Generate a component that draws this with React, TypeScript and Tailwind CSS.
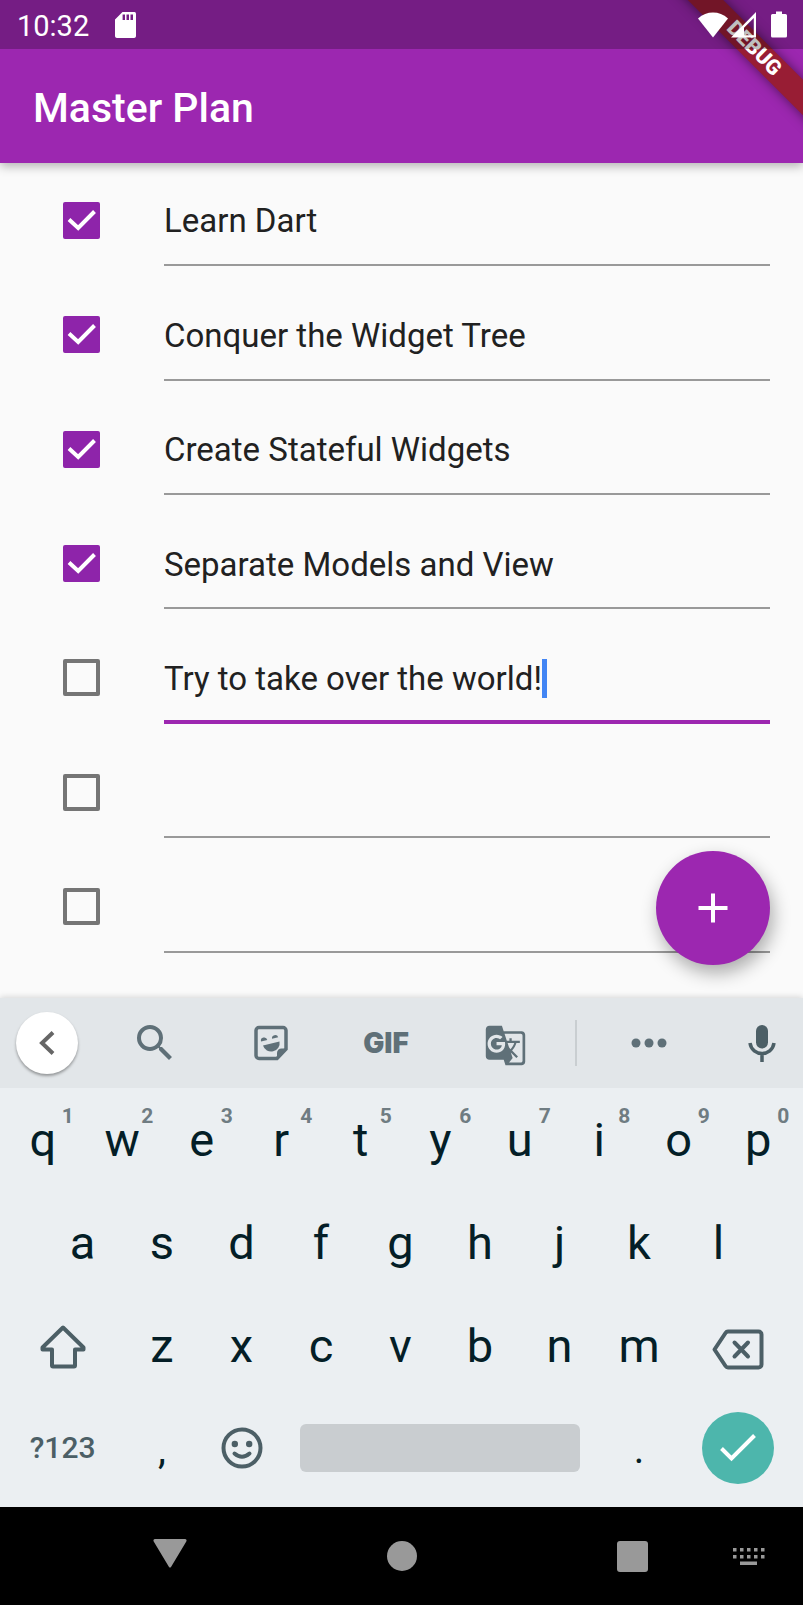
import { useState } from 'react';
import type { ReactNode } from 'react';
import { MdGTranslate, MdSearch } from 'react-icons/md';

type Task = { id: number; text: string; done: boolean };

const initialTasks: Task[] = [
  { id: 1, text: 'Learn Dart', done: true },
  { id: 2, text: 'Conquer the Widget Tree', done: true },
  { id: 3, text: 'Create Stateful Widgets', done: true },
  { id: 4, text: 'Separate Models and View', done: true },
  { id: 5, text: 'Try to take over the world!', done: false },
  { id: 6, text: '', done: false },
  { id: 7, text: '', done: false },
];

function StatusBar() {
  return (
    <div className="relative z-10 flex h-[49px] items-center justify-between bg-black/25 pr-4 pl-[17px] text-white">
      <div className="flex items-center gap-[26px]">
        <span className="pt-[3px] text-[29px] leading-none">10:32</span>
        <svg width="21" height="26" viewBox="0 0 21 26" aria-hidden="true">
          <path
            fill="currentColor"
            fillRule="evenodd"
            d="M7.5 0H18.5A2.2 2.2 0 0 1 21 2.3V23.5A2.3 2.3 0 0 1 18.6 26H2.4A2.3 2.3 0 0 1 0 23.5V7.6ZM7.6 2.6V8H10V2.6ZM11.5 2.6V8H14V2.6ZM15.5 2.6V8H18V2.6Z"
          />
        </svg>
      </div>
      <div className="flex items-center">
        <svg width="30" height="26" viewBox="0 0 30 26" aria-hidden="true">
          <path fill="currentColor" d="M15 25.5L0 6.5C4.5 2.4 9.5.5 15 .5S25.5 2.4 30 6.5Z" />
        </svg>
        <svg className="ml-[3px]" width="25" height="26" viewBox="0 0 25 26" aria-hidden="true">
          <path
            fill="currentColor"
            fillRule="evenodd"
            d="M25 0V25.5H0ZM22.8 6L13 15.8V23.3H22.8Z"
          />
        </svg>
        <svg className="ml-[15px]" width="16" height="27" viewBox="0 0 16 27" aria-hidden="true">
          <path
            fill="currentColor"
            d="M5 .5H11V3H14.5A1.5 1.5 0 0 1 16 4.5V25A1.5 1.5 0 0 1 14.5 26.5H1.5A1.5 1.5 0 0 1 0 25V4.5A1.5 1.5 0 0 1 1.5 3H5Z"
          />
        </svg>
      </div>
    </div>
  );
}

function Header() {
  return (
    <header className="relative z-10 bg-[#9c27b0] shadow-[0_3px_10px_rgba(0,0,0,0.3)]">
      <div className="pointer-events-none absolute inset-0 overflow-hidden">
        <div className="absolute top-[36px] -right-[53px] flex h-[25px] w-[204px] rotate-45 items-center justify-center bg-[#981d34] text-[21px] leading-none font-black text-white shadow-[0_0_12px_rgba(0,0,0,0.5)]">
          DEBUG
        </div>
      </div>
      <StatusBar />
      <div className="flex h-[114px] items-center px-[33px] pt-1">
        <h1 className="text-[41px] leading-none font-medium text-white">Master Plan</h1>
      </div>
    </header>
  );
}

function TaskRow({
  task,
  focused,
  onChange,
}: {
  task: Task;
  focused: boolean;
  onChange: (next: Task) => void;
}) {
  return (
    <li className="flex min-h-[114px] items-center gap-[64px] pr-[33px] pl-[63px]">
      <label className="relative block size-[37px] shrink-0">
        <input
          type="checkbox"
          aria-label={`Done: task ${task.id}`}
          checked={task.done}
          onChange={(e) => onChange({ ...task, done: e.target.checked })}
          className="peer block size-[37px] appearance-none rounded-[2px] border-4 border-[#757575] checked:border-[#8e24aa] checked:bg-[#8e24aa]"
        />
        <svg
          className="pointer-events-none absolute inset-0 hidden peer-checked:block"
          viewBox="0 0 37 37"
          fill="none"
          stroke="white"
          strokeWidth="4"
          aria-hidden="true"
        >
          <path d="M6 17.5L15.2 26L31.5 9.5" />
        </svg>
      </label>
      <div
        className={
          focused
            ? 'flex h-[93px] flex-1 items-center border-b-4 border-[#9c27b0] pt-[6px]'
            : 'flex h-[92px] flex-1 items-center border-b-2 border-[#999999] pt-1'
        }
      >
        <input
          type="text"
          aria-label={`Task ${task.id}`}
          value={task.text}
          onChange={(e) => onChange({ ...task, text: e.target.value })}
          className={
            focused
              ? 'field-sizing-content h-[40px] bg-transparent text-[33px] text-[#212121] caret-transparent outline-none'
              : 'h-[40px] w-full bg-transparent text-[33px] text-[#212121] outline-none'
          }
        />
        {focused && <span className="h-[39px] w-[5px] shrink-0 bg-[#4285f4]" />}
      </div>
    </li>
  );
}

function ToolButton({ label, children }: { label: string; children: ReactNode }) {
  return (
    <button type="button" aria-label={label} className="flex h-full items-center justify-center">
      {children}
    </button>
  );
}

function Toolbar() {
  return (
    <div className="grid h-[90px] grid-cols-[97fr_116fr_116fr_115fr_132fr_2px_144fr_82fr] items-center bg-[#e2e6e9] text-[#5f7078]">
      <div className="pl-4">
        <button
          type="button"
          aria-label="Back"
          className="flex size-[62px] items-center justify-center rounded-full bg-white shadow-[0_2px_3px_rgba(0,0,0,0.35)]"
        >
          <svg width="16" height="24" viewBox="0 0 16 24" fill="none" stroke="#666" strokeWidth="4" aria-hidden="true">
            <path d="M14 1.5L3 12L14 22.5" />
          </svg>
        </button>
      </div>
      <ToolButton label="Search">
        <MdSearch size={48} />
      </ToolButton>
      <ToolButton label="Stickers">
        <svg width="34" height="36" viewBox="0 0 34 36" aria-hidden="true">
          <path
            d="M5 2.5H29A3 3 0 0 1 32 5.5V24L23 33.5H5A3 3 0 0 1 2 30.5V5.5A3 3 0 0 1 5 2.5Z"
            fill="none"
            stroke="currentColor"
            strokeWidth="3.5"
          />
          <path fill="currentColor" d="M23 34V28A4.5 4.5 0 0 1 27.5 23.5H33Z" />
          <path fill="currentColor" d="M9 20.5L25.5 16.5A8.5 8.5 0 0 1 9 20.5Z" />
          <path fill="currentColor" d="M7 16.5A3.2 3.2 0 0 1 13.3 15ZM18 13.8A3.2 3.2 0 0 1 24.2 12.3Z" />
        </svg>
      </ToolButton>
      <button
        type="button"
        className="flex h-full items-center justify-center font-[Inter,sans-serif] text-[28px] leading-none font-black"
      >
        GIF
      </button>
      <div className="flex justify-center pt-1 pr-[8px]">
        <ToolButton label="Translate">
          <MdGTranslate size={43} />
        </ToolButton>
      </div>
      <div className="h-[46px] bg-[#c9ced1]" />
      <ToolButton label="More">
        <svg width="36" height="10" viewBox="0 0 36 10" fill="currentColor" aria-hidden="true">
          <circle cx="5" cy="5" r="4.5" />
          <circle cx="18" cy="5" r="4.5" />
          <circle cx="31" cy="5" r="4.5" />
        </svg>
      </ToolButton>
      <ToolButton label="Voice input">
        <svg width="28" height="37" viewBox="0 0 28 37" className="text-[#4c5f66]" aria-hidden="true">
          <rect x="8" y="0" width="12" height="23.5" rx="6" fill="currentColor" />
          <path
            d="M2 18C4 32 24 32 26 18M14 29V37"
            fill="none"
            stroke="currentColor"
            strokeWidth="3.5"
          />
        </svg>
      </ToolButton>
    </div>
  );
}

function LetterKey({ letter, hint }: { letter: string; hint?: string }) {
  return (
    <button
      type="button"
      className="relative col-span-2 flex h-[103px] items-center justify-center text-[47px] leading-none"
    >
      {letter}
      {hint && (
        <span className="absolute top-[18px] left-1/2 ml-[19px] text-[21px] leading-none font-bold text-[#6f7c82]">
          {hint}
        </span>
      )}
    </button>
  );
}

function Keyboard() {
  return (
    <section aria-label="Keyboard" className="relative shadow-[0_-1px_6px_rgba(0,0,0,0.15)]">
      <Toolbar />
      <div className="grid grid-cols-20 bg-[#ebeff2] pr-[5px] pb-[9px] pl-[3px] text-[#041e27]">
        {[...'qwertyuiop'].map((letter, i) => (
          <LetterKey key={letter} letter={letter} hint={String((i + 1) % 10)} />
        ))}
        <span />
        {[...'asdfghjkl'].map((letter) => (
          <LetterKey key={letter} letter={letter} />
        ))}
        <span />
        <button type="button" aria-label="Shift" className="col-span-3 flex h-[103px] items-center justify-center text-[#4c5f66]">
          <svg width="46" height="48" viewBox="0 0 46 48" fill="none" stroke="currentColor" strokeWidth="4" strokeLinejoin="round" aria-hidden="true">
            <path d="M23 5.500L43.500 25.500V27.500H35V43.500A1 1 0 0 1 34 44.500H13A1 1 0 0 1 12 43.500V27.500H2.500V25.500Z" />
          </svg>
        </button>
        {[...'zxcvbnm'].map((letter) => (
          <LetterKey key={letter} letter={letter} />
        ))}
        <button type="button" aria-label="Backspace" className="col-span-3 flex h-[103px] items-center justify-center text-[#4c5f66]">
          <svg width="52" height="50" viewBox="0 0 52 50" fill="none" stroke="currentColor" strokeWidth="4" strokeLinejoin="round" aria-hidden="true">
            <path d="M16 10.500H46.500A3 3 0 0 1 49.500 13.500V43.500A3 3 0 0 1 46.500 46.500H16Q14.500 46.500 13.500 45L2.500 28.500L13.500 12Q14.500 10.500 16 10.500Z" />
            <path d="M22.500 21.500L36 35.500M36 21.500L22.500 35.500" strokeLinecap="round" />
          </svg>
        </button>
        <button type="button" className="col-span-3 flex h-[101px] items-center justify-center text-[30px] leading-none font-medium text-[#4c5f66]">
          ?123
        </button>
        <button type="button" className="col-span-2 flex h-[101px] items-center justify-center pt-1 text-[40px] leading-none">
          ,
        </button>
        <button type="button" aria-label="Emoji" className="col-span-2 flex h-[101px] items-center justify-center text-[#4c5f66]">
          <svg width="42" height="42" viewBox="0 0 42 42" fill="none" stroke="currentColor" strokeWidth="4" aria-hidden="true">
            <circle cx="21" cy="21" r="18.5" />
            <circle cx="13.8" cy="17" r="3.2" fill="currentColor" stroke="none" />
            <circle cx="28.2" cy="17" r="3.2" fill="currentColor" stroke="none" />
            <path d="M13.5 26.5Q21 33 28.5 26.5" strokeLinecap="round" />
          </svg>
        </button>
        <button type="button" aria-label="Space" className="col-span-8 flex h-[101px] items-center px-[19px]">
          <span className="h-12 w-full rounded-md bg-[#c9cdd0]" />
        </button>
        <button type="button" className="col-span-2 flex h-[101px] items-center justify-center pt-1 text-[40px] leading-none">
          .
        </button>
        <button type="button" aria-label="Enter" className="col-span-3 flex h-[101px] items-center justify-center">
          <span className="flex size-[72px] items-center justify-center rounded-full bg-[#4db6ac]">
            <svg width="36" height="28" viewBox="0 0 36 28" fill="none" stroke="white" strokeWidth="4" aria-hidden="true">
              <path d="M1.500 14.500L11.500 24.500L34.500 1.500" />
            </svg>
          </span>
        </button>
      </div>
    </section>
  );
}

const dotColumns = [0, 7, 14, 21, 28];

function NavigationBar() {
  return (
    <nav className="flex h-[98px] items-center bg-black pr-[38px] pl-[153px] text-[#999999]">
      <div className="flex flex-1 justify-between">
        <button type="button" aria-label="Back">
          <svg width="34" height="34" viewBox="0 0 34 34" fill="currentColor" aria-hidden="true">
            <path d="M2 0H32A1.600 1.600 0 0 1 33.300 2.500L18 28A1.300 1.300 0 0 1 16 28L.7 2.500A1.600 1.600 0 0 1 2 0Z" />
          </svg>
        </button>
        <button type="button" aria-label="Home">
          <svg width="30" height="34" viewBox="0 0 30 34" fill="currentColor" aria-hidden="true">
            <circle cx="15" cy="17" r="15" />
          </svg>
        </button>
        <button type="button" aria-label="Recent apps">
          <svg width="31" height="34" viewBox="0 0 31 34" fill="currentColor" aria-hidden="true">
            <rect x="0" y="2" width="31" height="31" rx="3" />
          </svg>
        </button>
      </div>
      <button type="button" aria-label="Switch keyboard" className="ml-[85px]">
        <svg width="32" height="17" viewBox="0 0 32 17" fill="currentColor" aria-hidden="true">
          {dotColumns.map((x) => (
            <g key={x}>
              <rect x={x} y="0" width="3.5" height="3.5" />
              <rect x={x} y="7" width="3.5" height="3.5" />
            </g>
          ))}
          <rect x="7" y="13.5" width="17" height="3.5" />
        </svg>
      </button>
    </nav>
  );
}

export default function App() {
  const [tasks, setTasks] = useState(initialTasks);
  const update = (next: Task) => setTasks(tasks.map((t) => (t.id === next.id ? next : t)));
  const add = () => setTasks([...tasks, { id: tasks.length + 1, text: '', done: false }]);

  return (
    <div className="flex min-h-screen flex-col bg-[#fafafa] font-[Roboto,sans-serif]">
      <Header />
      <main className="relative flex flex-1 flex-col">
        <ul className="grid flex-1 auto-rows-fr pb-[34px]">
          {tasks.map((task) => (
            <TaskRow key={task.id} task={task} focused={task.id === 5} onChange={update} />
          ))}
        </ul>
        <button
          type="button"
          aria-label="Add task"
          onClick={add}
          className="absolute right-[33px] bottom-[33px] flex size-[114px] items-center justify-center rounded-full bg-[#9c27b0] shadow-[3px_8px_18px_rgba(0,0,0,0.32)]"
        >
          <svg width="30" height="30" viewBox="0 0 30 30" stroke="white" strokeWidth="4" aria-hidden="true">
            <path d="M15 .5V29.500M.5 15H29.500" />
          </svg>
        </button>
      </main>
      <Keyboard />
      <NavigationBar />
    </div>
  );
}
